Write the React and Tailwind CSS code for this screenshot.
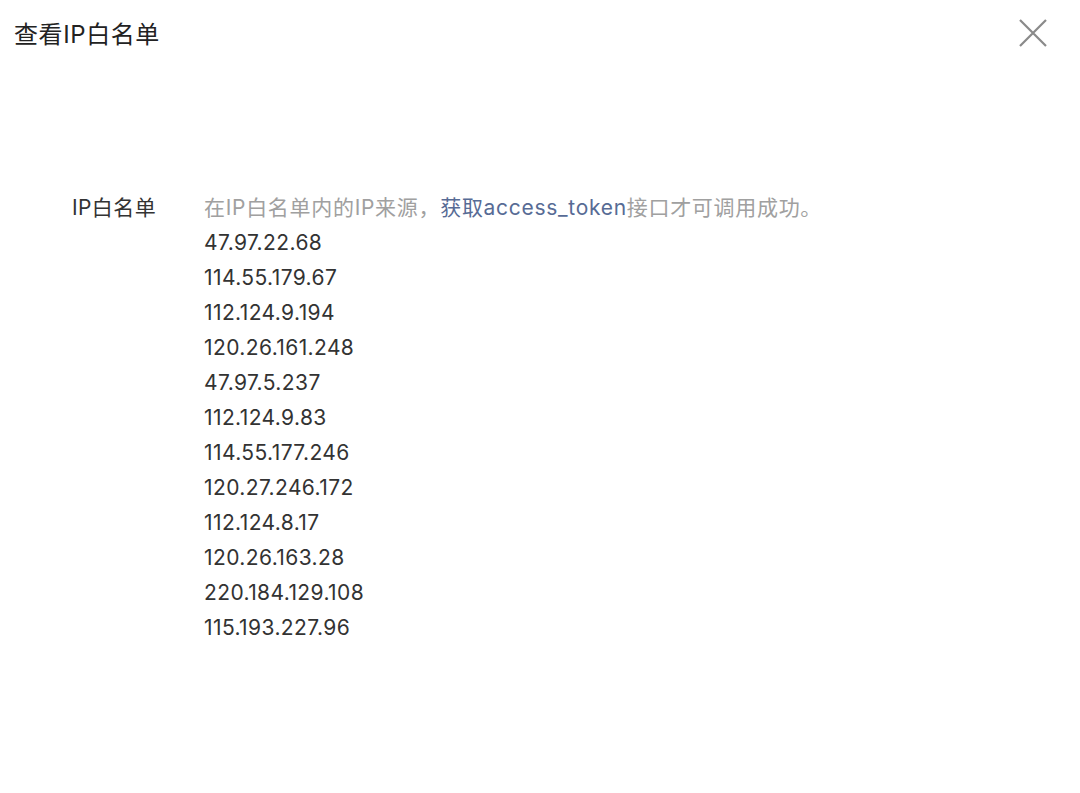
import React from "react";

const ips = [
  "47.97.22.68",
  "114.55.179.67",
  "112.124.9.194",
  "120.26.161.248",
  "47.97.5.237",
  "112.124.9.83",
  "114.55.177.246",
  "120.27.246.172",
  "112.124.8.17",
  "120.26.163.28",
  "220.184.129.108",
  "115.193.227.96",
];

export default function App() {
  return (
    <div
      className="w-[1080px] h-[793px] bg-white text-[#333333]"
      style={{ fontFamily: '"Inter", "Noto Sans CJK SC", sans-serif' }}
    >
      <div className="flex items-center justify-between pl-[14px] pr-[32px] pt-[18px]">
        <div className="text-[24px] leading-[34px] tracking-[0.6px] text-[#222222]">查看IP白名单</div>
        <svg width="30" height="30" viewBox="0 0 30 30" className="mt-[-4px]">
          <path d="M2 2 L28 28 M28 2 L2 28" stroke="#8a8a8a" strokeWidth="2.2" fill="none" />
        </svg>
      </div>
      <div className="flex pl-[72px] pt-[138px] text-[21px] leading-[35px] tracking-[0.4px]">
        <div className="w-[132px] shrink-0 text-[#333333]">IP白名单</div>
        <div className="flex flex-col">
          <div className="text-[#a0a0a0] whitespace-nowrap tracking-[0.7px]">
            在IP白名单内的IP来源，<span className="text-[#576b95]">获取access_token</span>接口才可调用成功。
          </div>
          {ips.map((ip) => (
            <div key={ip} className="text-[#333333]">{ip}</div>
          ))}
        </div>
      </div>
    </div>
  );
}
